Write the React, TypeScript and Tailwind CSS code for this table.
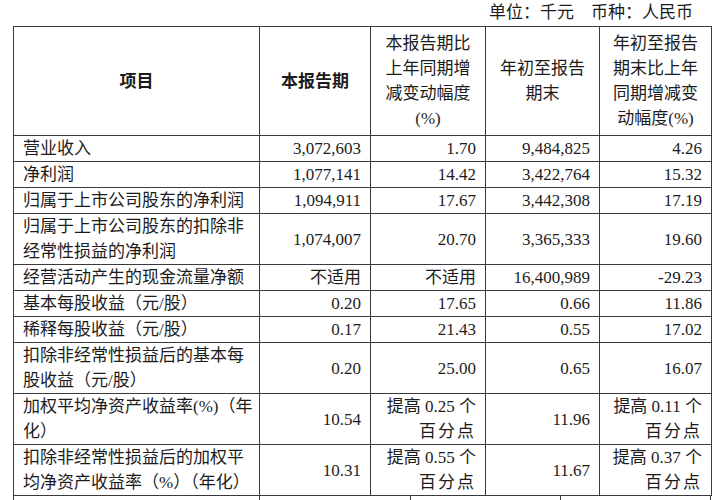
const font = "font-['Liberation_Serif','Noto_Sans_CJK_SC',serif]";

type Row = {
  label: string[];
  values: (string | string[])[];
};

const rows: Row[] = [
  { label: ["营业收入"], values: ["3,072,603", "1.70", "9,484,825", "4.26"] },
  { label: ["净利润"], values: ["1,077,141", "14.42", "3,422,764", "15.32"] },
  {
    label: ["归属于上市公司股东的净利润"],
    values: ["1,094,911", "17.67", "3,442,308", "17.19"],
  },
  {
    label: ["归属于上市公司股东的扣除非", "经常性损益的净利润"],
    values: ["1,074,007", "20.70", "3,365,333", "19.60"],
  },
  {
    label: ["经营活动产生的现金流量净额"],
    values: ["不适用", "不适用", "16,400,989", "-29.23"],
  },
  { label: ["基本每股收益（元/股）"], values: ["0.20", "17.65", "0.66", "11.86"] },
  { label: ["稀释每股收益（元/股）"], values: ["0.17", "21.43", "0.55", "17.02"] },
  {
    label: ["扣除非经常性损益后的基本每", "股收益（元/股）"],
    values: ["0.20", "25.00", "0.65", "16.07"],
  },
  {
    label: ["加权平均净资产收益率(%)（年", "化）"],
    values: ["10.54", ["提高 0.25 个", "百分点"], "11.96", ["提高 0.11 个", "百分点"]],
  },
  {
    label: ["扣除非经常性损益后的加权平", "均净资产收益率（%）（年化）"],
    values: ["10.31", ["提高 0.55 个", "百分点"], "11.67", ["提高 0.37 个", "百分点"]],
  },
];

const cell = "border border-[#3a3a3a] p-0 leading-[25px] text-[17px]";

export default function App() {
  return (
    <div className={`min-h-[500px] w-[717px] overflow-hidden bg-white text-[#1c1c1c] ${font}`}>
      <div className="flex h-[26px] w-[711px] items-center justify-end pr-[18px] text-[17px] leading-[26px]">
        单位：千元　币种：人民币
      </div>
      <table className="ml-[13px] w-[698px] table-fixed border-collapse">
        <colgroup>
          <col className="w-[246px]" />
          <col className="w-[111px]" />
          <col className="w-[115px]" />
          <col className="w-[114px]" />
          <col className="w-[112px]" />
        </colgroup>
        <thead>
          <tr>
            <th className={`${cell} py-[4px] text-center font-bold`}>项目</th>
            <th className={`${cell} py-[4px] text-center font-bold`}>本报告期</th>
            <th className={`${cell} py-[4px] text-center font-normal leading-[24px]`}>
              本报告期比
              <br />
              上年同期增
              <br />
              减变动幅度
              <br />
              (%)
            </th>
            <th className={`${cell} py-[4px] text-center font-normal leading-[24px]`}>
              年初至报告
              <br />
              期末
            </th>
            <th className={`${cell} py-[4px] text-center font-normal leading-[24px]`}>
              年初至报告
              <br />
              期末比上年
              <br />
              同期增减变
              <br />
              动幅度(%)
            </th>
          </tr>
        </thead>
        <tbody>
          {rows.map((row) => (
            <tr key={row.label.join("")}>
              <td className={`${cell} pl-[9px] text-left align-middle`}>
                {row.label.map((line) => (
                  <div key={line}>{line}</div>
                ))}
              </td>
              {row.values.map((v, i) => (
                <td key={i} className={`${cell} pr-[9px] text-right align-middle`}>
                  {Array.isArray(v) ? (
                    <>
                      <div>{v[0]}</div>
                      <div className="tracking-[2px]">{v[1]}</div>
                    </>
                  ) : (
                    v
                  )}
                </td>
              ))}
            </tr>
          ))}
        </tbody>
      </table>
      <div className="ml-[13px] flex h-[20px] w-[698px] border-l border-[#3a3a3a]">
        <div className="w-[246px] border-r border-[#3a3a3a]" />
        <div className="w-[151px] border-r border-[#3a3a3a]" />
        <div className="w-[150px] border-r border-[#3a3a3a]" />
        <div className="flex-1 border-r border-[#3a3a3a]" />
      </div>
    </div>
  );
}
